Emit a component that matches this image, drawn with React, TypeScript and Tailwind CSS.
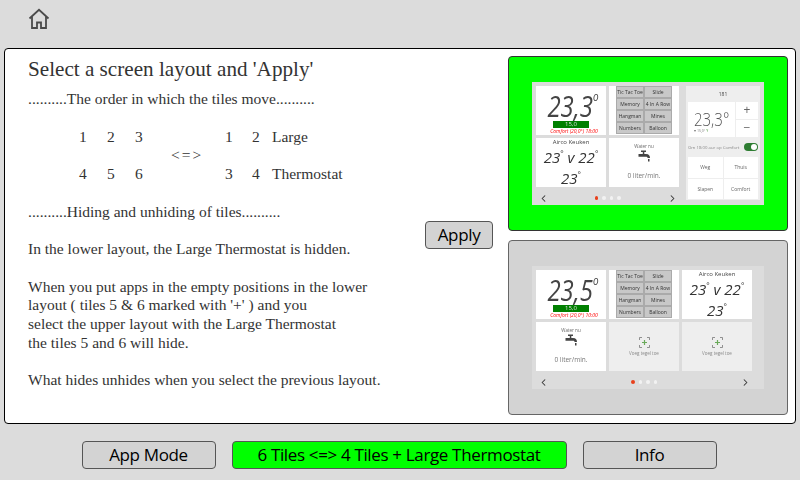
import { ChevronLeft, ChevronRight } from "lucide-react";

function HomeIcon() {
    return (
        <svg width="22" height="22" viewBox="0 0 22 22" fill="none" stroke="#4a4a4a" strokeWidth="1.8">
            <path d="M1.5 10.5 L11 1.8 L20.5 10.5" />
            <path d="M4 8.5 V20 H9 V14.5 H13 V20 H18 V8.5" />
        </svg>
    );
}

function Faucet() {
    return (
        <svg width="13" height="13" viewBox="0 0 13 13" fill="#444">
            <rect x="3" y="0.5" width="5" height="1.5" />
            <rect x="4.8" y="2" width="1.5" height="2" />
            <path d="M0.5 4 H8 C11 4 12 6 12 8 H9.5 C9.5 7 9 6.8 8 6.8 H0.5 Z" />
            <rect x="10" y="9" width="1.5" height="2.5" />
        </svg>
    );
}

function AddIcon() {
    return (
        <svg width="11" height="11" viewBox="0 0 11 11" fill="none">
            <path d="M0.5 3 V0.5 H3 M8 0.5 H10.5 V3 M10.5 8 V10.5 H8 M3 10.5 H0.5 V8" stroke="#777" strokeWidth="0.8" />
            <path d="M5.5 3 V8 M3 5.5 H8" stroke="#6aaa5a" strokeWidth="1.2" />
        </svg>
    );
}

function Tile({ children }: { children?: React.ReactNode }) {
    return <div className="bg-white w-[70px] h-[48.5px] flex flex-col items-center overflow-hidden">{children}</div>;
}

function LargeTile({ temp, comfort }: { temp: string; comfort: string }) {
    return (
        <Tile>
            <div className="flex items-start mt-[4px] h-[30px] text-[#444] italic text-[24px] leading-[27px] ml-[4px] scale-y-[1.18] origin-top">
                {temp}
                <span className="text-[10px] leading-[10px]">o</span>
            </div>
            <div className="bg-[#008000] w-[36px] h-[7px] mt-px text-[6px] leading-[7px] text-center text-[#ddd]">15,0</div>
            <div className="text-[#f00] italic text-[5px] leading-[6px] ml-[6px] whitespace-nowrap">{comfort}</div>
        </Tile>
    );
}

function GamesTile() {
    const games = ["Tic Tac Toe", "Slide", "Memory", "4 In A Row", "Hangman", "Mines", "Numbers", "Balloon"];
    return (
        <Tile>
            <div className="grid grid-cols-2 w-[56px]">
                {games.map((g) => (
                    <div key={g} className="h-[12.1px] bg-[#c8c8c8] border border-[#aaa] text-[#333] text-[5px] leading-[10px] text-center whitespace-nowrap overflow-hidden">
                        {g}
                    </div>
                ))}
            </div>
        </Tile>
    );
}

function AircoTile() {
    return (
        <Tile>
            <div className="text-[#444] text-[6px] leading-[9px]">Airco Keuken</div>
            <div className="text-[#333] italic text-[15px] leading-[20px] whitespace-nowrap">
                23<span className="text-[8px] align-top leading-[12px]">°</span> v 22<span className="text-[8px] align-top leading-[12px]">°</span>
            </div>
            <div className="text-[#333] italic text-[15px] leading-[20px] mt-px">
                23<span className="text-[8px] align-top leading-[12px]">°</span>
            </div>
        </Tile>
    );
}

function WaterTile() {
    return (
        <Tile>
            <div className="text-[#666] text-[4.5px] leading-[6px] mt-[5px]">Water nu</div>
            <div className="mt-[1px]">
                <Faucet />
            </div>
            <div className="text-[#777] text-[6.5px] leading-[8px] mt-[9px]">0 liter/min.</div>
        </Tile>
    );
}

function EmptyTile() {
    return (
        <div className="bg-[#eeeeee] w-[70px] h-[48.5px] flex flex-col items-center justify-center">
            <AddIcon />
            <div className="text-[#888] text-[4.5px] leading-[6px] mt-[1.5px] whitespace-nowrap">Voeg tegel toe</div>
        </div>
    );
}

function Pager({ active = 0 }: { active?: number }) {
    return (
        <div className="flex items-center justify-between px-[1.5px] mt-[3px] h-[17px] text-[#333]">
            <ChevronLeft size={11} strokeWidth={2.2} />
            <div className="flex gap-[4px]">
                {[0, 1, 2, 3].map((i) => (
                    <div key={i} className={i === active ? "w-[3.5px] h-[3.5px] rounded-full bg-[#e8401c]" : "w-[3.5px] h-[3.5px] rounded-full bg-[#f2f2f2]"} />
                ))}
            </div>
            <ChevronRight size={11} strokeWidth={2.2} />
        </div>
    );
}

function ThermostatPanel() {
    return (
        <div className="bg-[#eeeeee] w-[74px] h-[114px] flex flex-col px-[2px] ml-[7px]">
            <div className="h-[16px] text-center text-[#444] text-[5px] leading-[16px]">181</div>
            <div className="flex h-[35px] gap-px">
                <div className="bg-white flex-1 flex flex-col pl-[6px] pt-[6px]">
                    <div className="text-[#555] text-[15px] leading-[18px] font-light scale-y-[1.2] origin-top">23,3°</div>
                    <div className="text-[#777] text-[3.5px] leading-[6px] mt-[2px] whitespace-nowrap">
                        ▾ 15,0° <span className="text-[#4a9a3a]">Y</span>
                    </div>
                </div>
                <div className="w-[22px] flex flex-col gap-px">
                    <div className="bg-white flex-1 text-center text-[#666] text-[12px] leading-[16px]">+</div>
                    <div className="bg-white flex-1 text-center text-[#666] text-[12px] leading-[16px]">−</div>
                </div>
            </div>
            <div className="flex items-center justify-between h-[20px]">
                <span className="text-[#888] text-[4.3px] whitespace-nowrap">Om 18:00 aur op Comfort</span>
                <div className="w-[14px] h-[8px] rounded-full bg-[#2e7d32] flex justify-end items-center pr-px">
                    <div className="w-[6px] h-[6px] rounded-full bg-white" />
                </div>
            </div>
            <div className="grid grid-cols-2 gap-px">
                {["Weg", "Thuis", "Slapen", "Comfort"].map((m) => (
                    <div key={m} className="bg-white h-[20.5px] text-center text-[#666] text-[5px] leading-[20px]">
                        {m}
                    </div>
                ))}
            </div>
        </div>
    );
}

function Preview({ selected, children }: { selected?: boolean; children: React.ReactNode }) {
    return (
        <div className={selected ? "h-[175px] bg-[#00ff00] border border-[#333] rounded-[4px] flex items-center justify-center" : "h-[175px] bg-[#d3d3d3] border border-[#666] rounded-[4px] flex items-center justify-center"}>
            <div className="bg-[#dcdcdc] w-[232px] h-[123px] p-[4px] flex blur-[0.3px]">{children}</div>
        </div>
    );
}

function FooterButton({ label, active, width }: { label: string; active?: boolean; width: string }) {
    return (
        <button className={`${width} h-[28px] ${active ? "bg-[#00ff00]" : "bg-[#d3d3d3]"} border border-[#555] rounded-[4px] text-[17px] tracking-[-0.35px] text-black`}>
            {label}
        </button>
    );
}

export default function App() {
    return (
        <div className="w-[800px] h-[480px] bg-[#dcdcdc] flex flex-col font-['Open_Sans',sans-serif]">
            {/* Top bar */}
            <div className="h-[48px] pl-[28px] pt-[8px] shrink-0">
                <HomeIcon />
            </div>

            {/* Main panel */}
            <div className="mx-[4px] h-[376px] shrink-0 bg-white border border-black rounded-[4px] flex">
                <div className="w-[420px] pl-[23px] pt-[7px] font-['Liberation_Serif',serif] text-[#333] text-[15.5px] leading-[18.75px]">
                    <h1 className="text-[21.15px] leading-[26px] mb-[8px]">Select a screen layout and 'Apply'</h1>
                    <p>..........The order in which the tiles move..........</p>
                    <div className="mt-[18.75px] ml-[51px] grid grid-cols-[28px_28px_36px_54px_27px_20px_auto]">
                        <span>1</span><span>2</span><span>3</span><span />
                        <span>1</span><span>2</span><span>Large</span>
                        <span /><span /><span /><span className="tracking-[2px]">{"<=>"}</span>
                        <span /><span /><span />
                        <span>4</span><span>5</span><span>6</span><span />
                        <span>3</span><span>4</span><span>Thermostat</span>
                    </div>
                    <p className="mt-[18.75px]">..........Hiding and unhiding of tiles..........</p>
                    <p className="mt-[18.75px]">In the lower layout, the Large Thermostat is hidden.</p>
                    <p className="mt-[18.75px]">
                        When you put apps in the empty positions in the lower
                        <br />
                        layout ( tiles 5 &amp; 6 marked with '+' ) and you
                        <br />
                        select the upper layout with the Large Thermostat
                        <br />
                        the tiles 5 and 6 will hide.
                    </p>
                    <p className="mt-[18.75px]">What hides unhides when you select the previous layout.</p>
                </div>

                <div className="w-[83px] flex items-start pt-[172px]">
                    <button className="w-[68px] h-[28px] bg-[#d3d3d3] border border-[#555] rounded-[4px] text-[17px] tracking-[-0.35px] text-black">Apply</button>
                </div>

                {/* Layout previews */}
                <div className="w-[280px] pt-[7px] flex flex-col gap-[9px]">
                    <Preview selected>
                        <div>
                            <div className="grid grid-cols-[70px_70px] gap-x-[3px] gap-y-[3.5px]">
                                <LargeTile temp="23,3" comfort="Comfort (20,0°) 18:00" />
                                <GamesTile />
                                <AircoTile />
                                <WaterTile />
                            </div>
                            <Pager />
                        </div>
                        <ThermostatPanel />
                    </Preview>
                    <Preview>
                        <div>
                            <div className="grid grid-cols-[70px_70px_70px] gap-x-[3px] gap-y-[3.5px]">
                                <LargeTile temp="23,5" comfort="Comfort (20,0°) 10:00" />
                                <GamesTile />
                                <AircoTile />
                                <WaterTile />
                                <EmptyTile />
                                <EmptyTile />
                            </div>
                            <Pager />
                        </div>
                    </Preview>
                </div>
            </div>

            {/* Bottom buttons */}
            <div className="flex-1 flex items-start justify-center gap-[16px] pt-[17px] pr-[2px]">
                <FooterButton label="App Mode" width="w-[134px]" />
                <FooterButton label="6 Tiles <=> 4 Tiles + Large Thermostat" active width="w-[335px]" />
                <FooterButton label="Info" width="w-[134px]" />
            </div>
        </div>
    );
}
